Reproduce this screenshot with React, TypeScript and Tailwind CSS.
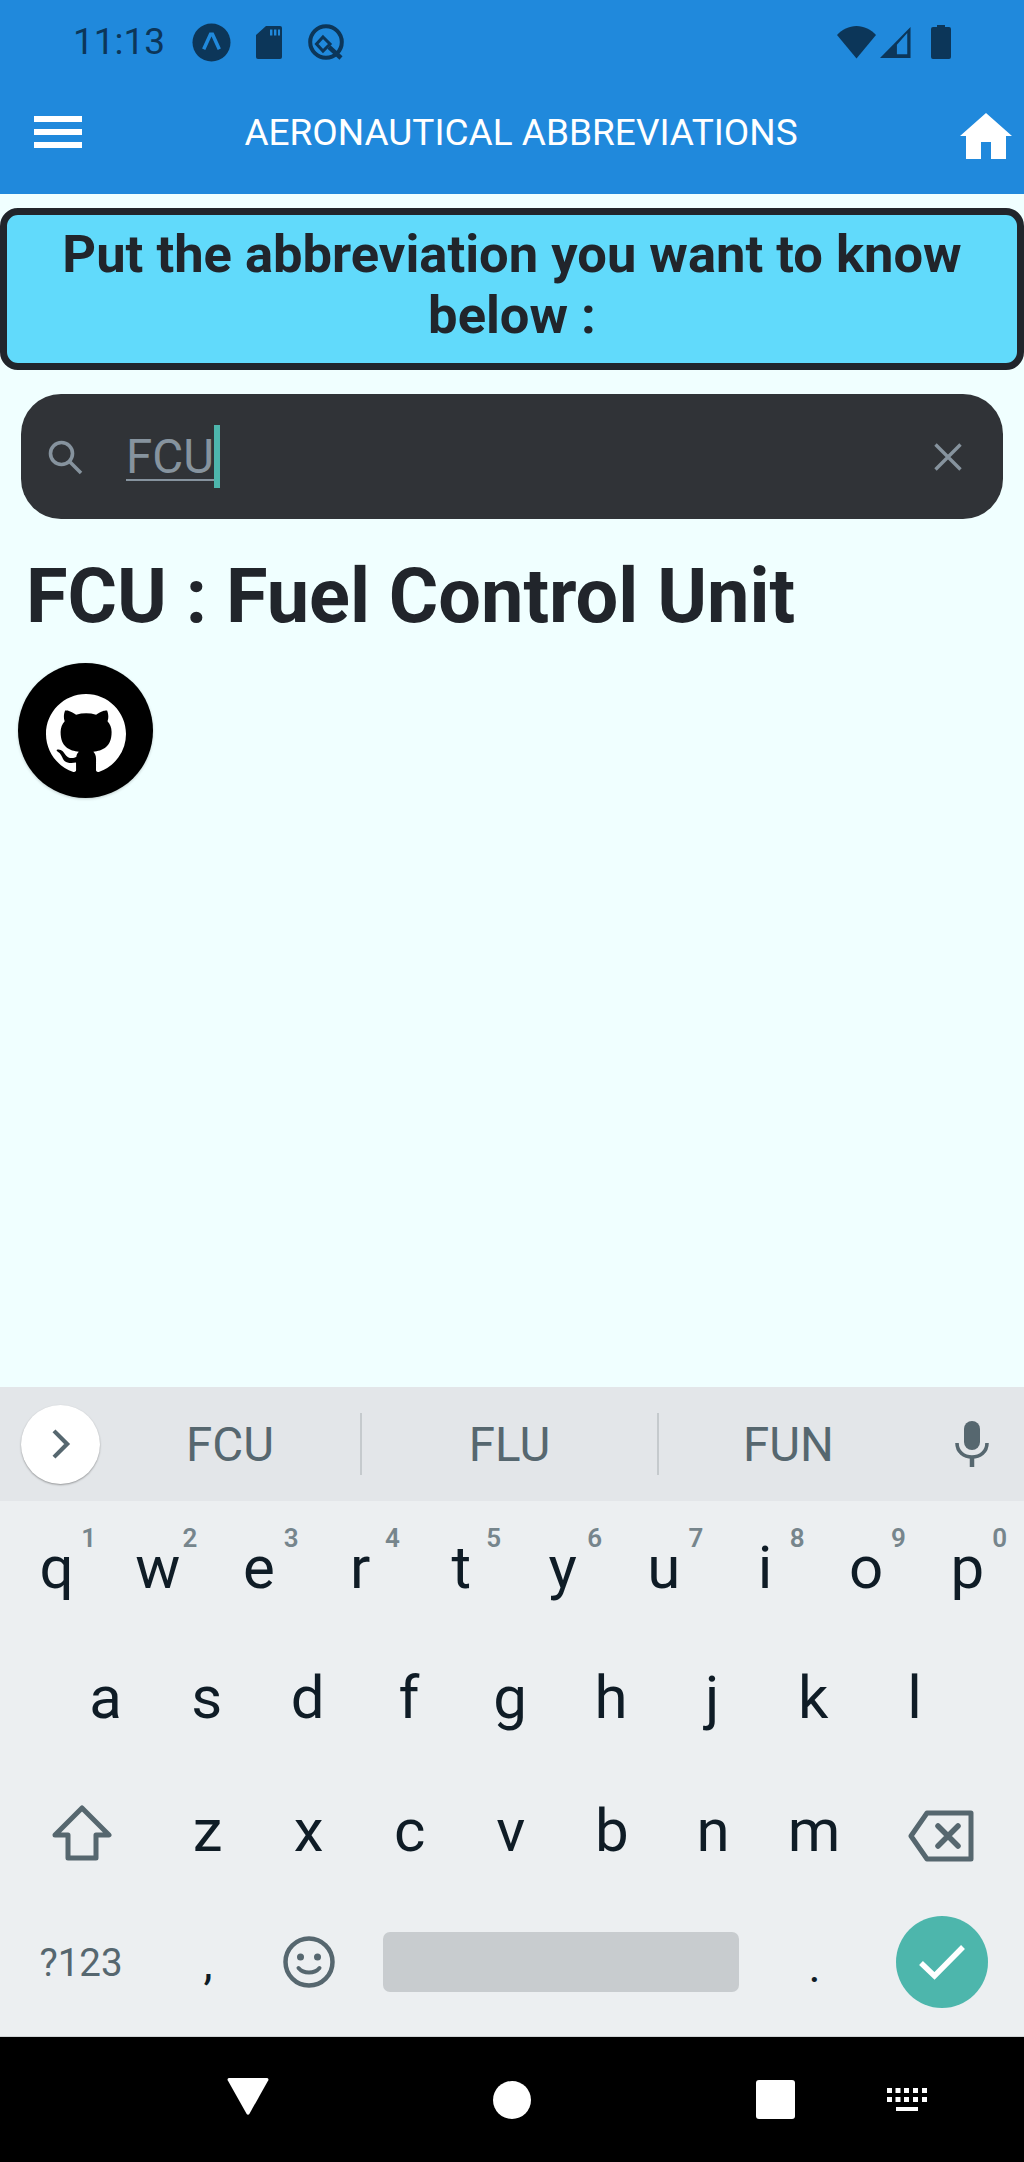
import React from "react";

const GITHUB =
  "M8 0C3.58 0 0 3.58 0 8c0 3.54 2.29 6.53 5.47 7.59.4.07.55-.17.55-.38 0-.19-.01-.82-.01-1.49-2.01.37-2.53-.49-2.69-.94-.09-.23-.48-.94-.82-1.13-.28-.15-.68-.52-.01-.53.63-.01 1.08.58 1.23.82.72 1.21 1.87.87 2.33.66.07-.52.28-.87.51-1.07-1.78-.2-3.64-.89-3.64-3.95 0-.87.31-1.59.82-2.15-.08-.2-.36-1.02.08-2.12 0 0 .67-.21 2.2.82.64-.18 1.32-.27 2-.27.68 0 1.36.09 2 .27 1.53-1.04 2.2-.82 2.2-.82.44 1.1.16 1.92.08 2.12.51.56.82 1.27.82 2.15 0 3.07-1.87 3.75-3.65 3.95.29.25.54.73.54 1.48 0 1.07-.01 1.93-.01 2.2 0 .21.15.46.55.38A8.013 8.013 0 0016 8c0-4.42-3.58-8-8-8z";

function Key({ l, n }: { l: string; n?: string }) {
  return (
    <div className="relative flex h-full items-start justify-center">
      <span className="text-[60px] leading-[68px] text-[#0f1c26]">{l}</span>
      {n && (
        <span className="absolute right-[11px] top-[-11px] text-[26px] font-semibold leading-[30px] text-[#76858c]">
          {n}
        </span>
      )}
    </div>
  );
}

function StatusBar() {
  return (
    <div className="flex h-[84px] items-center pl-[73px] pr-[73px] text-[#0c3659]">
      <span className="text-[37px] leading-[42px]">11:13</span>
      <svg viewBox="0 0 40 40" className="ml-[27px] h-[39px] w-[39px]">
        <circle cx="20" cy="20" r="19.5" fill="#0c3659" />
        <path d="M12 27 19 11.5h2L28 27" fill="none" stroke="#2089dc" strokeWidth="3.6" />
      </svg>
      <svg viewBox="0 0 26 33" className="ml-[25px] h-[33px] w-[26px]">
        <path d="M10 0h14a2 2 0 0 1 2 2v29a2 2 0 0 1-2 2H2a2 2 0 0 1-2-2V9z" fill="#0c3659" />
        <path d="M14 3.5h2.400v6H14zM18 3.5h2.400v6H18zM22 3.5h2v6h-2z" fill="#2089dc" />
      </svg>
      <svg viewBox="0 0 36 36" className="ml-[26px] h-[36px] w-[36px]">
        <circle cx="18" cy="18" r="15.800" fill="none" stroke="#0c3659" strokeWidth="4" />
        <path d="M15 13 22 20 15 27 8.500 20z" fill="none" stroke="#0c3659" strokeWidth="3" />
        <path d="M21 23 33 34" stroke="#0c3659" strokeWidth="4.500" />
      </svg>
      <div className="flex-1" />
      <svg viewBox="0 0 39 33" className="h-[33px] w-[39px]">
        <path d="M0 9C5 3.500 12 0 19.500 0S34 3.500 39 9L19.500 32.500z" fill="#0c3659" />
      </svg>
      <svg viewBox="0 0 33 33" className="ml-[4px] h-[33px] w-[31px]">
        <path d="M32.500 0v33H0zM18 19v10h11V6.500z" fillRule="evenodd" fill="#0c3659" />
      </svg>
      <svg viewBox="0 0 20 34" className="ml-[20px] h-[34px] w-[20px]">
        <path d="M6 2V0h8v2h4a2 2 0 0 1 2 2v28a2 2 0 0 1-2 2H2a2 2 0 0 1-2-2V4a2 2 0 0 1 2-2z" fill="#0c3659" />
      </svg>
    </div>
  );
}

function Header() {
  return (
    <div className="h-[194px] bg-[#2089dc]">
      <StatusBar />
      <div className="flex h-[96px] items-center pl-[34px] pr-[12px]">
        <div className="flex w-[48px] flex-col gap-[7px]">
          <div className="h-[6px] bg-white" />
          <div className="h-[6px] bg-white" />
          <div className="h-[6px] bg-white" />
        </div>
        <div className="flex-1 pt-[2px] text-center text-[37px] leading-[40px] text-white">
          AERONAUTICAL ABBREVIATIONS
        </div>
        <svg viewBox="0 0 52 46" className="mt-[8px] h-[46px] w-[52px]">
          <path d="M26 0 52 23h-6v23H31V29h-10v17H6V23H0z" fill="#fff" />
        </svg>
      </div>
    </div>
  );
}

function Main() {
  return (
    <div className="flex-1 bg-[#f0ffff] pt-[14px]">
      <div className="rounded-[18px] border-[7px] border-[#21252b] bg-[#61dafb] pb-[17px] pt-[9px] text-center text-[52.5px] font-bold leading-[61px] text-[#21252b]">
        Put the abbreviation you want to know
        <br />
        below :
      </div>
      <div className="mx-[21px] mt-[24px] flex h-[125px] items-center rounded-[40px] bg-[#303337] pl-[26px] pr-[41px]">
        <svg viewBox="0 0 36 36" fill="none" stroke="#86939e" strokeWidth="3.6" className="h-[36px] w-[36px]">
          <circle cx="14.500" cy="14.500" r="11" />
          <path d="M22.500 22.500 34 34" />
        </svg>
        <div className="ml-[43px] flex h-[63px] items-center">
          <span className="mt-[4px] border-b-[2px] border-[#86939e] text-[47.5px] leading-[43px] text-[#86939e]">FCU</span>
          <div className="h-[63px] w-[6px] bg-[#4db6ac]" />
        </div>
        <div className="flex-1" />
        <svg viewBox="0 0 28 28" stroke="#86939e" strokeWidth="3.4" className="h-[28px] w-[28px]">
          <path d="M1.500 1.500 26.500 26.500M26.500 1.500 1.500 26.500" />
        </svg>
      </div>
      <div className="mt-[35px] pl-[26px] text-[75.7px] font-bold leading-[85px] text-[#21252b]">
        FCU : Fuel Control Unit
      </div>
      <div className="ml-[18px] mt-[24px] flex h-[135px] w-[135px] items-center justify-center rounded-full bg-black shadow-[0_1px_3px_rgba(0,0,0,0.2)]">
        <svg viewBox="0 0 16 16" className="mt-[6px] h-[80px] w-[80px]">
          <path d={GITHUB} fill="#fff" />
        </svg>
      </div>
    </div>
  );
}

function Suggestions() {
  return (
    <div className="flex h-[114px] items-center bg-[#e3e6e9] text-[47.5px] text-[#56676f]">
      <div className="ml-[21px] flex h-[79px] w-[79px] shrink-0 items-center justify-center rounded-full bg-white shadow-[0_1px_2px_rgba(0,0,0,0.35)]">
        <svg viewBox="0 0 20 32" fill="none" stroke="#56676f" strokeWidth="4.5" className="ml-[1px] h-[30px] w-[19px]">
          <path d="M2 2l14 14L2 30" />
        </svg>
      </div>
      <div className="w-[260px] pt-[3px] text-center">FCU</div>
      <div className="h-[62px] w-[2px] bg-[#c5cacd]" />
      <div className="w-[295px] pt-[3px] text-center">FLU</div>
      <div className="h-[62px] w-[2px] bg-[#c5cacd]" />
      <div className="w-[259px] pt-[3px] text-center">FUN</div>
      <svg viewBox="0 0 34 46" className="ml-[37px] h-[46px] w-[34px]">
        <rect x="9" y="0" width="16" height="29" rx="8" fill="#56676f" />
        <path d="M2 22c0 9 7 14 15 14s15-5 15-14" fill="none" stroke="#56676f" strokeWidth="3.6" />
        <path d="M17 36v10" stroke="#56676f" strokeWidth="4.5" />
      </svg>
    </div>
  );
}

function Keyboard() {
  return (
    <div className="bg-[#eceff1]">
      <Suggestions />
      <div className="grid h-[134px] grid-cols-10 px-[6px] pt-[33px]">
        {[
          ["q", "1"],
          ["w", "2"],
          ["e", "3"],
          ["r", "4"],
          ["t", "5"],
          ["y", "6"],
          ["u", "7"],
          ["i", "8"],
          ["o", "9"],
          ["p", "0"],
        ].map(([l, n]) => (
          <Key key={l} l={l} n={n} />
        ))}
      </div>
      <div className="grid h-[134px] grid-cols-9 pl-[55px] pr-[59px] pt-[29px]">
        {"asdfghjkl".split("").map((l) => (
          <Key key={l} l={l} />
        ))}
      </div>
      <div className="grid h-[134px] grid-cols-[151px_repeat(7,101.1px)_152px] pl-[6px] pt-[28px]">
        <div className="flex justify-center pt-[8px]">
          <svg viewBox="0 0 60 56" fill="none" stroke="#56676f" strokeWidth="5" strokeLinejoin="round" className="h-[56px] w-[60px]">
            <path d="M30 3 57 30H44V53H16V30H3z" />
          </svg>
        </div>
        {"zxcvbnm".split("").map((l) => (
          <Key key={l} l={l} />
        ))}
        <div className="flex justify-center pt-[13px]">
          <svg viewBox="0 0 66 52" fill="none" stroke="#56676f" strokeWidth="5" strokeLinejoin="round" className="h-[52px] w-[66px]">
            <path d="M19 3H63V49H19L3 26z" />
            <path d="M30 16 50 36M50 16 30 36" strokeLinecap="round" strokeWidth="5.500" />
          </svg>
        </div>
      </div>
      <div className="flex h-[133px] items-center px-[5px] pb-[16px]">
        <div className="w-[152px] pt-[3px] text-center text-[38.5px] text-[#56676f]">?123</div>
        <div className="flex w-[102px] justify-center pt-[4px] text-[46px] text-[#0f1c26]">,</div>
        <div className="flex w-[100px] justify-center">
          <svg viewBox="0 0 52 52" className="h-[52px] w-[52px]">
            <circle cx="26" cy="26" r="23.500" fill="none" stroke="#56676f" strokeWidth="4.500" />
            <circle cx="17.500" cy="21" r="3.500" fill="#56676f" />
            <circle cx="34.500" cy="21" r="3.500" fill="#56676f" />
            <path d="M15.500 32c5 6 16 6 21 0" fill="none" stroke="#56676f" strokeWidth="4" strokeLinecap="round" />
          </svg>
        </div>
        <div className="ml-[24px] h-[60px] w-[356px] rounded-[7px] bg-[#c8cccf]" />
        <div className="ml-[25px] w-[101px] pt-[10px] text-center text-[46px] text-[#0f1c26]">.</div>
        <div className="ml-[31px] flex h-[92px] w-[92px] items-center justify-center rounded-full bg-[#4db6ac]">
          <svg viewBox="0 0 46 36" fill="none" stroke="#fff" strokeWidth="5.500" className="h-[36px] w-[46px]">
            <path d="M2 19 15.500 32 44 3" />
          </svg>
        </div>
      </div>
    </div>
  );
}

function NavBar() {
  return (
    <div className="flex h-[126px] items-center border-t-[1px] border-[#d0d4d6] bg-black pl-[227px]">
      <svg viewBox="0 0 42 37" className="mb-[6px] h-[37px] w-[42px]">
        <path d="M2 0h38a1.500 1.500 0 0 1 1.300 2.200L22.300 36a1.500 1.500 0 0 1-2.600 0L.7 2.200A1.500 1.500 0 0 1 2 0z" fill="#fff" />
      </svg>
      <div className="ml-[224px] h-[38px] w-[38px] rounded-full bg-white" />
      <div className="ml-[225px] h-[39px] w-[39px] rounded-[3px] bg-white" />
      <svg viewBox="0 0 40 23" className="ml-[92px] h-[23px] w-[40px]" fill="#fff">
        <path d="M0 0h5v5H0zM8.500 0h5v5h-5zM17 0h5v5h-5zM26 0h5v5h-5zM35 0h5v5h-5zM0 9h5v5H0zM8.500 9h5v5h-5zM17 9h5v5h-5zM26 9h5v5h-5zM35 9h5v5h-5zM9 19h22v4H9z" />
      </svg>
    </div>
  );
}

export default function App() {
  return (
    <div className="flex h-[2162px] w-[1024px] flex-col overflow-hidden font-['Roboto',sans-serif]">
      <Header />
      <Main />
      <Keyboard />
      <NavBar />
    </div>
  );
}
